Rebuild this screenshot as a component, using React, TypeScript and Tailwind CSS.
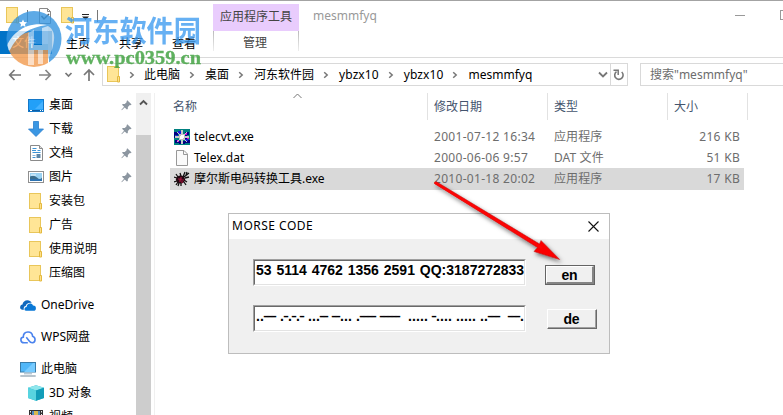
import React from "react";

const pathParts = ["此电脑", "桌面", "河东软件园", "ybzx10", "ybzx10", "mesmmfyq"];

function Folder({ className = "" }: { className?: string }) {
  return (
    <svg width="14" height="17" viewBox="0 0 14 17" className={className}>
      <rect x="0.5" y="0.5" width="11" height="15" fill="#ffe596" stroke="#e9c65a" />
      <path d="M10.5 10.5h2v5.5h-2z" fill="#ffe08a" stroke="#e3b93f" />
    </svg>
  );
}

function Chevron({ className = "" }: { className?: string }) {
  return (
    <svg width="6" height="8" viewBox="0 0 6 8" className={className}>
      <path d="M1.2 1.2 4.2 4 1.2 6.8" fill="none" stroke="#767676" strokeWidth="1.5" />
    </svg>
  );
}

function Pin() {
  return (
    <svg width="11" height="11" viewBox="0 0 11 11">
      <path d="M6.3 0.3 10.6 4.4 9.4 5.2 8.8 5 6.9 7 6.8 8.9 5.9 9.6 3.7 7.4 0.8 10.2 0.4 9.8 3.1 6.8 1 4.7 1.8 3.9 3.8 3.9 5.8 2.1 5.5 1.2z" fill="#8c96a0" />
    </svg>
  );
}

function DesktopIcon() {
  return (
    <svg width="16" height="13" viewBox="0 0 16 13">
      <rect x="0.5" y="0.5" width="15" height="12" fill="#22a0f8" stroke="#1478c8" />
      <path d="M7 10 15 2v8z" fill="#45b2ff" />
      <path d="M1 11.5h14" stroke="#0d5ea5" />
      <path d="M2 11.5h2M12 11.5h1M14 11.5h1" stroke="#fff" />
    </svg>
  );
}
function DownloadIcon() {
  return (
    <svg width="16" height="16" viewBox="0 0 16 16">
      <path d="M5.5 0.5h5v7.500h5L8 15.500.5 8h5z" fill="#3b97e3" stroke="#2a7fce" strokeWidth="0.8" />
    </svg>
  );
}
function DocIcon() {
  return (
    <svg width="13" height="16" viewBox="0 0 13 16">
      <path d="M.5.5h9l3 3v12H.5z" fill="#fff" stroke="#8a8a8a" />
      <path d="M9.500.5v3h3" fill="#ddd" stroke="#8a8a8a" />
      <path d="M2.500 3.500h4M2 5.500h4M7.500 5.500h3M2.500 7.500h8M2.500 12.500h3" stroke="#3d94d6" />
      <path d="M2.500 10.500h3" stroke="#8ab7db" />
      <path d="M6.500 9h4v4h-4z" fill="#5c86a8" />
    </svg>
  );
}
function PictureIcon() {
  return (
    <svg width="16" height="12" viewBox="0 0 16 12">
      <rect x="0.5" y="0.5" width="15" height="11" fill="#fff" stroke="#8f8f8f" />
      <rect x="2" y="2" width="12" height="8" fill="#9bd2f2" />
      <path d="M2 5.500q4-2 7 1t5 0V10H2z" fill="#3b6e8d" />
      <path d="M2 8h12v2H2z" fill="#2d72b0" />
      <path d="M3 3.500h5v1H3z" fill="#eaf7ff" />
    </svg>
  );
}
function OneDriveIcon() {
  return (
    <svg width="16" height="11" viewBox="0 0 16 11">
      <path d="M.2 8.200C-.2 6 1 4.800 2.500 4.600 2.700 2 5 .3 7.400.3c2 0 3.500 1 4.300 2.500C8.500 2.200 6 4 5.700 6 4 6.300 3.300 8 3.900 9.700 1.700 9.900.5 9.200.2 8.200z" fill="#1068bd" />
      <path d="M6 10.800C3.800 10.800 4 7.200 6.600 7.100 6.600 3.200 11.700 2.200 13 5.500c2.300 0 3 1.300 2.900 3 0 1.500-.9 2.300-2.200 2.300z" fill="#0a78d6" />
    </svg>
  );
}
function WpsIcon() {
  return (
    <svg width="16" height="13" viewBox="0 0 16 13">
      <path d="M7.800 11.800H4C.1 11.700-.1 6.600 3.300 6.100 3.200-.4 12.500-.7 12.600 5.200c3.300 1.200 3.300 6.200-.2 6.600-2 .1-2.800-1.200-3.600-2.300L6.300 6.300" fill="none" stroke="#4b83ee" strokeWidth="1.6" />
    </svg>
  );
}
function PcIcon() {
  return (
    <svg width="16" height="15" viewBox="0 0 16 15">
      <rect x="0.5" y="0.5" width="15" height="9.500" fill="#51b7f8" stroke="#397ca9" />
      <path d="M4 10 13 1h2v9z" fill="#77cbff" />
      <path d="M4 11.800h8" stroke="#9ab3c3" />
      <path d="M.3 14h15.400" stroke="#70899b" />
    </svg>
  );
}
function CubeIcon() {
  return (
    <svg width="16" height="16" viewBox="0 0 16 16">
      <path d="M8 .3 16 2.800V13l-8 2.800L0 13V2.800z" fill="#25b4cb" />
      <path d="M0 2.800 8 .3 16 2.800 8 5.400z" fill="#8fe6ec" />
      <path d="M0 2.800 8 5.400v10.400L0 13z" fill="#58d4e0" />
      <path d="M8 5.400 16 2.800V13l-8 2.800z" fill="#129db9" />
    </svg>
  );
}
function VideoIcon() {
  return (
    <svg width="14" height="14" viewBox="0 0 14 14">
      <rect width="14" height="14" fill="#333" />
      <rect x="3" y="1" width="8" height="12" fill="#4e8ac4" />
      <path d="M5 1h4v5H5z" fill="#d9b94e" />
      <path d="M1.500 1v13M12.500 1v13" stroke="#eee" strokeDasharray="1.500 1.500" />
    </svg>
  );
}

function TelecvtIcon() {
  return (
    <svg width="16" height="16" viewBox="0 0 16 16" shapeRendering="crispEdges">
      <rect width="16" height="16" fill="#008080" />
      <path d="M0 3h4v3H1v5h3v3H1V9H0zM11 3h4v3h-2v5h3v3h-5zM4 12h7v3H5z" fill="#000080" />
      <path d="M4 2h3v3H4zM11 10h3v2h-3zM2 6h2v2H2z" fill="#1717e0" />
      <path d="M11 4h2v2h-2zM13 8h2v2h-2zM3 11h2v2H3z" fill="#d400d4" />
      <path d="M8 1v14M1 8h14M3 3l10 10M13 3 3 13" stroke="#c8c8c8" strokeWidth="1.300" />
      <circle cx="8" cy="8" r="3" fill="#c0c0c0" />
      <circle cx="8" cy="8" r="2" fill="#fff" />
    </svg>
  );
}
function FileIcon() {
  return (
    <svg width="12" height="16" viewBox="0 0 12 16">
      <path d="M.5.5h7.500l3.500 3.500v11.500H.5z" fill="#fafafa" stroke="#989898" />
      <path d="M7.500.5v4h4" fill="none" stroke="#989898" />
    </svg>
  );
}
function BugIcon() {
  return (
    <svg width="16" height="16" viewBox="0 0 16 16">
      <path d="M4 6 2 3M7 5 6 2M3 7 0 6M3 10 0 11M4 11 2 14M7 12v3M10 11l2 3M10 9l3 2M9 6l2-5M10 6l5-4M11 7l4-1M12 4l1-3M5 12l-1 3" stroke="#111" strokeWidth="1.300" fill="none" />
      <ellipse cx="6.500" cy="8.500" rx="4.600" ry="4" fill="#210811" />
      <path d="M4 8h2v3M7 6v3h3M8 10v2" stroke="#a4123d" strokeWidth="1.200" fill="none" />
    </svg>
  );
}

const quickItems: { label: string; icon: React.ReactNode; pinned?: boolean }[] = [
  { label: "桌面", icon: <DesktopIcon />, pinned: true },
  { label: "下载", icon: <DownloadIcon />, pinned: true },
  { label: "文档", icon: <DocIcon />, pinned: true },
  { label: "图片", icon: <PictureIcon />, pinned: true },
  { label: "安装包", icon: <Folder /> },
  { label: "广告", icon: <Folder /> },
  { label: "使用说明", icon: <Folder /> },
  { label: "压缩图", icon: <Folder /> },
];

function TreeItem({ icon, label, pinned, nested }: { icon: React.ReactNode; label: string; pinned?: boolean; nested?: boolean }) {
  return (
    <div className={`flex h-6 shrink-0 items-center ${nested ? "pl-7" : "pl-5"}`}>
      <span className="flex w-4 shrink-0 justify-center">{icon}</span>
      <span className="ml-[5px] grow whitespace-nowrap">{label}</span>
      {pinned && (
        <span className="mr-1">
          <Pin />
        </span>
      )}
    </div>
  );
}

const files = [
  { name: "telecvt.exe", date: "2001-07-12 16:34", type: "应用程序", size: "216 KB", icon: <TelecvtIcon /> },
  { name: "Telex.dat", date: "2000-06-06 9:57", type: "DAT 文件", size: "51 KB", icon: <FileIcon /> },
  { name: "摩尔斯电码转换工具.exe", date: "2010-01-18 20:02", type: "应用程序", size: "17 KB", icon: <BugIcon />, selected: true },
];

const morse = "..--- .-.-.- ...-- --... .---- -----  ..... -.... ..... ..---  ---.";

function Field({ children }: { children: React.ReactNode }) {
  return (
    <div className="h-[27px] w-[273px] border border-b-white border-l-[#a0a0a0] border-r-white border-t-[#a0a0a0]">
      <div className="h-full overflow-hidden border border-b-[#e3e3e3] border-l-[#696969] border-r-[#e3e3e3] border-t-[#696969] bg-white pl-px">
        {children}
      </div>
    </div>
  );
}

function MorseDialog() {
  return (
    <div className="absolute left-[228px] top-[213px] flex h-[141px] w-[382px] flex-col border border-[#bdbdbd] bg-[#f0f0f0]">
      <div className="flex h-[25px] shrink-0 items-center justify-between bg-white pl-[3px] pr-[10px] text-black">
        <span className="-mt-[2px] tracking-[0.5px]">MORSE CODE</span>
        <svg width="11" height="11" viewBox="0 0 11 11">
          <path d="M.5.5l10 10M10.500.5l-10 10" stroke="#111" strokeWidth="1.100" />
        </svg>
      </div>
      <div className="flex pl-6 pt-5">
        <div className="flex flex-col gap-[19px]">
          <Field>
            <div className="whitespace-nowrap font-['Liberation_Sans',Arial,sans-serif] text-[14px] font-bold leading-[19px] [word-spacing:1px] text-black">
              53 5114 4762 1356 2591 QQ:3187272833
            </div>
          </Field>
          <Field>
            <div className="flex h-[18px] font-['Liberation_Sans',Arial,sans-serif] text-black">
              {morse.split("").map((c, i) =>
                c === "-" ? (
                  <span key={i} className="flex w-1 shrink-0 justify-center text-[18px] leading-[18px]">-</span>
                ) : (
                  <span key={i} className="flex w-1 shrink-0 justify-center whitespace-pre text-[14px] font-bold leading-[19px]">{c}</span>
                )
              )}
            </div>
          </Field>
        </div>
        <div className="ml-[19px] flex flex-col gap-6 pt-[6px] font-['Liberation_Sans',Arial,sans-serif] text-[14px] font-bold leading-[16px] tracking-[-0.2px] text-black">
          <button className="h-5 w-[50px] border border-[#646464]">
            <span className="block h-full border-b-2 border-l border-r-2 border-t border-b-[#858585] border-l-white border-r-[#858585] border-t-white">en</span>
          </button>
          <button className="ml-[2px] h-5 w-[50px] border border-b-[#696969] border-l-white border-r-[#696969] border-t-white">
            <span className="block h-full border-b border-r border-[#a0a0a0] leading-[18px]">de</span>
          </button>
        </div>
      </div>
    </div>
  );
}

function Watermark() {
  return (
    <svg className="absolute left-0 top-0" width="210" height="75" viewBox="0 0 210 75">
      <defs>
        <clipPath id="badge">
          <ellipse cx="34" cy="39" rx="27.500" ry="28" />
        </clipPath>
      </defs>
      <g clipPath="url(#badge)" opacity="0.8">
        <path d="M0 0h70v70H49V44H0z" fill="#3695e0" />
        <path d="M6 52C10 42 18 35 29 32v35H20z" fill="#f29a4e" />
        <path d="M34 50h14v18H28V50z" fill="#f29a4e" />
        <path d="M5 53C8 35 25 21 47 25c-17 2-30 10-37 25z" fill="#fff" />
        <path d="M28 33l6-3v15h8V28l6-2v24h-5v14h-5V50h-4v15h-6z" fill="#fff" fillOpacity="0.6" />
        <path d="M48 26c4 2 7 7 6 14-1 9-4 15-6 20z" fill="#a9cdea" />
        <path d="m23 19.500 1.200 2.500 2.800.3-2 1.900.5 2.800-2.500-1.400-2.500 1.400.5-2.800-2-1.900 2.800-.3z" fill="#fff" />
      </g>
      <text x="65" y="41.500" textLength="136" lengthAdjust="spacingAndGlyphs" fontFamily="'Noto Sans CJK SC', sans-serif" fontWeight="700" fontSize="29" fill="#3c9bf0" opacity="0.78">河东软件园</text>
      <text x="66" y="63.500" textLength="135" lengthAdjust="spacingAndGlyphs" fontFamily="'Liberation Serif', serif" fontWeight="700" fontSize="18" fill="#3ca03c" stroke="#3ca03c" strokeWidth="0.300" opacity="0.82">www.pc0359.cn</text>
    </svg>
  );
}

export default function App() {
  return (
    <div className="relative flex h-[415px] w-[783px] flex-col overflow-hidden bg-white font-['Noto_Sans','Noto_Sans_CJK_SC',sans-serif] text-[12px] leading-4 text-black">
      <div className="h-px shrink-0 bg-[#a3a3a3]" />
      <header className="flex h-[57px] shrink-0 border-b border-[#dadada]">
        <div className="w-[213px]">
          <div className="flex h-[30px] items-start pl-[6px] pt-[6px]">
            <Folder />
            <span className="ml-[7px] mt-[3px] h-3 w-px bg-[#777]" />
            <svg className="ml-[11px] mt-px" width="12" height="16" viewBox="0 0 12 16">
              <path d="M.5.5h8l3 3v12H.5z" fill="#fff" stroke="#888" />
              <path d="M8.500.5v3h3" fill="none" stroke="#888" />
              <path d="m2.500 8 2.500 3 5-5" fill="none" stroke="#5a5a5a" strokeWidth="1.500" />
            </svg>
            <Folder className="ml-[10px]" />
            <svg className="ml-[7px] mt-[7px]" width="7" height="6" viewBox="0 0 7 6">
              <path d="M0 .5h7" stroke="#222" />
              <path d="M0 2.500h7L3.500 6z" fill="#222" />
            </svg>
            <span className="ml-2 mt-[3px] h-3 w-px bg-[#777]" />
          </div>
          <nav className="flex h-[23px] items-center">
            <span className="flex h-full w-[52px] items-center bg-[#0173c7] pl-3 text-white">文件</span>
            <span className="ml-[14px] w-[53px] pt-[3px]">主页</span>
            <span className="w-[53px] pt-[3px]">共享</span>
            <span className="pt-[3px]">查看</span>
          </nav>
        </div>
        <div className="w-[86px] pt-[3px] text-center text-[#444]">
          <div className="h-[27px] bg-[#e9ccfd] pt-[5px]">应用程序工具</div>
          <div className="flex h-5 justify-between">
            <span className="w-px bg-gradient-to-b from-[#bbb] to-[#eee]" />
            <span className="pr-[2px] pt-1">管理</span>
            <span className="w-px bg-gradient-to-b from-[#bbb] to-[#eee]" />
          </div>
        </div>
        <span className="ml-[14px] pt-[7px] text-[#999]">mesmmfyq</span>
        <div className="ml-auto flex">
          <span className="mt-[14px] h-px w-[10px] bg-[#999]" />
          <span className="ml-[35px] mt-[9px] h-[10px] w-[3px] border border-r-0 border-[#999]" />
        </div>
      </header>

      <div className="flex h-[35px] shrink-0 pt-[5px]">
        <div className="flex h-[23px] w-[102px] items-center">
          <svg width="102" height="23" viewBox="0 0 102 23" fill="none" strokeWidth="1.700">
            <path d="M21 12H10M14.500 7 9.700 12l4.800 5" stroke="#777" />
            <path d="M39 12h11M45.500 7l4.800 5-4.800 5" stroke="#858585" />
            <path d="m65.500 10 3 3 3-3" stroke="#777" />
            <path d="M89 18V7M84 12l5-5 5 5" stroke="#777" />
          </svg>
        </div>
        <div className="flex h-[23px] w-[526px] items-center border border-[#d9d9d9]">
          <Folder className="ml-1" />
          {pathParts.map((part, i) => (
            <React.Fragment key={i}>
              <Chevron className={i === 0 ? "ml-[8px] mr-[9px]" : "ml-[9px] mr-[10px]"} />
              <span className={part === "ybzx10" ? "tracking-[0.1px]" : ""}>{part}</span>
            </React.Fragment>
          ))}
          <svg className="ml-auto" width="10" height="7" viewBox="0 0 10 7">
            <path d="m1 1.500 4 4 4-4" fill="none" stroke="#777" strokeWidth="1.800" />
          </svg>
          <span className="ml-[2px] flex h-full w-[17px] items-center justify-center border-l border-[#d9d9d9]">
            <svg width="12" height="12" viewBox="0 0 12 12">
              <path d="M8.700 3A4.200 4.200 0 1 1 3.500 2.700" fill="none" stroke="#777" strokeWidth="1.600" />
              <path d="M5.200 6V1.200H.5" fill="none" stroke="#777" strokeWidth="1.500" />
            </svg>
          </span>
        </div>
        <div className="ml-3 flex h-[23px] grow items-center border border-r-0 border-[#d9d9d9] pl-[9px] text-[#6d6d6d]">搜索"mesmmfyq"</div>
      </div>

      <main className="flex min-h-0 grow">
        <aside className="flex w-[136px] shrink-0 flex-col overflow-hidden">
          {quickItems.map((item) => (
            <TreeItem key={item.label} {...item} nested />
          ))}
          <div className="mt-2 flex flex-col gap-2">
            <TreeItem icon={<OneDriveIcon />} label="OneDrive" />
            <TreeItem icon={<WpsIcon />} label="WPS网盘" />
            <TreeItem icon={<PcIcon />} label="此电脑" />
          </div>
          <TreeItem icon={<CubeIcon />} label="3D 对象" nested />
          <TreeItem icon={<VideoIcon />} label="视频" nested />
        </aside>
        <div className="w-[15px] shrink-0 bg-[#f0f0f0]">
          <div className="flex h-[42px] justify-center pt-[6px]">
            <svg width="9" height="7" viewBox="0 0 9 7">
              <path d="M1 5.500 4.500 2 8 5.500" fill="none" stroke="#555" strokeWidth="1.900" />
            </svg>
          </div>
          <div className="h-[280px] bg-[#cdcdcd]" />
        </div>
        <div className="ml-[3px] w-px shrink-0 bg-[#f0f0f0]" />
        <section className="grow pl-[15px]">
          <div className="flex h-[27px] text-[#44546d]">
            <div className="flex w-[258px] border-r border-[#e2e2e2] pl-[3px] pt-[6px]">
              名称
              <svg className="-mt-[6px] ml-[96px]" width="9" height="6" viewBox="0 0 9 6">
                <path d="M.5 5 4.500 1l4 4" fill="none" stroke="#777" />
              </svg>
            </div>
            <div className="w-[120px] border-r border-[#e2e2e2] pl-[6px] pt-[6px]">修改日期</div>
            <div className="w-[120px] border-r border-[#e2e2e2] pl-[6px] pt-[6px]">类型</div>
            <div className="w-[80px] border-r border-[#e2e2e2] pl-[6px] pt-[6px]">大小</div>
          </div>
          <div className="pt-[6px]">
            {files.map((f) => (
              <div key={f.name} className={`flex w-[574px] items-center text-[#6d6d6d] ${f.selected ? "h-[22px] bg-[#d9d9d9]" : "h-[21px]"}`}>
                <span className="ml-1 flex w-4 justify-center">{f.icon}</span>
                <span className="ml-1 w-[240px] text-black">{f.name}</span>
                <span className="w-[120px] tracking-[0.3px]">{f.date}</span>
                <span className="w-[120px] tracking-[0.1px]">{f.type}</span>
                <span className="w-[66px] text-right tracking-[0.3px]">{f.size}</span>
              </div>
            ))}
          </div>
        </section>
      </main>

      <MorseDialog />

      <svg className="absolute left-[420px] top-[170px]" width="160" height="105" viewBox="420 170 160 105">
        <defs>
          <filter id="arrowShadow" x="-20%" y="-20%" width="140%" height="140%">
            <feDropShadow dx="1.500" dy="2.500" stdDeviation="2" floodColor="#000" floodOpacity="0.550" />
          </filter>
        </defs>
        <g filter="url(#arrowShadow)" fill="#fb0505" stroke="#b01010" strokeWidth="0.500">
          <path d="M434.500 183.500 436 181.500 539.500 244 541 240.500 559.700 259.500 534 251.500 537.500 247.500z" />
        </g>
        <path d="M435.500 183 541 247.500" stroke="#fb0505" strokeWidth="2.600" strokeLinecap="round" />
      </svg>

      <Watermark />
    </div>
  );
}
